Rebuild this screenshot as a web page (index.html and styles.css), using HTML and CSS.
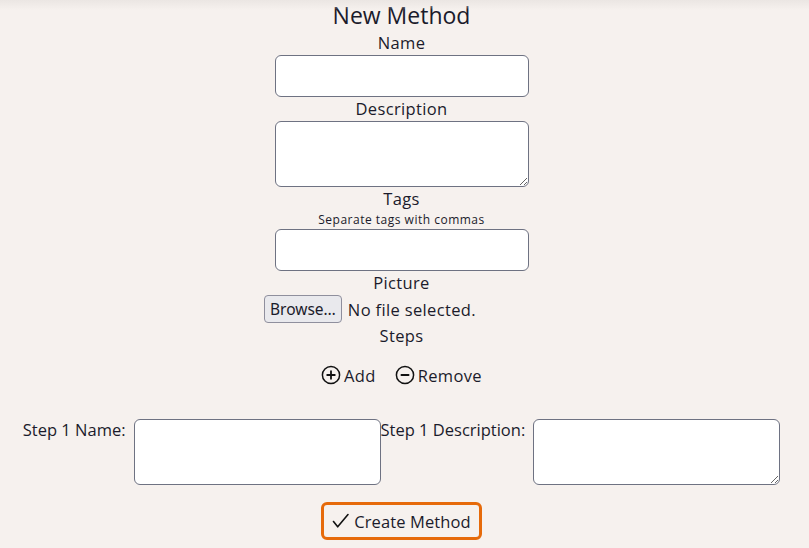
FILE: index.html
```html
<!DOCTYPE html>
<html lang="en">
<head>
<meta charset="utf-8">
<title>New Method</title>
<link rel="stylesheet" href="styles.css">
</head>
<body>
<div class="topshade"></div>
<form class="method-form">
  <h2 class="title">New Method</h2>
  <label class="field-label" for="name">Name</label>
  <input class="text-input" id="name" type="text">
  <label class="field-label" for="desc">Description</label>
  <textarea class="text-area" id="desc"></textarea>
  <label class="field-label" for="tags">Tags</label>
  <div class="hint">Separate tags with commas</div>
  <input class="text-input" id="tags" type="text">
  <label class="field-label">Picture</label>
  <div class="file-row">
    <button type="button" class="browse">Browse…</button>
    <span class="file-status">No file selected.</span>
  </div>
  <div class="field-label">Steps</div>
  <div class="step-actions">
    <span class="action">
      <svg width="20" height="20" viewBox="0 0 20 20"><circle cx="10" cy="10" r="8.6" fill="none" stroke="#111" stroke-width="1.5"/><path d="M10 6.2v7.6M6.2 10h7.6" stroke="#111" stroke-width="1.8" stroke-linecap="round"/></svg>
      Add
    </span>
    <span class="action">
      <svg width="20" height="20" viewBox="0 0 20 20"><circle cx="10" cy="10" r="8.6" fill="none" stroke="#111" stroke-width="1.5"/><path d="M6.4 10h7.2" stroke="#111" stroke-width="1.8" stroke-linecap="round"/></svg>
      Remove
    </span>
  </div>
  <div class="step-row">
    <label class="step-label">Step 1 Name:</label>
    <textarea class="step-input no-resize"></textarea>
    <label class="step-label">Step 1 Description:</label>
    <textarea class="step-input"></textarea>
  </div>
  <button type="button" class="create">
    <svg width="18" height="18" viewBox="0 0 18 18"><path d="M1.5 9.5l4.2 5.3L16 2.5" fill="none" stroke="#111" stroke-width="1.6" stroke-linecap="round" stroke-linejoin="round"/></svg>
    Create Method
  </button>
</form>
</body>
</html>
```
FILE: styles.css
```css
html, body {
  margin: 0;
  padding: 0;
}
body {
  background: #f6f1ee;
  font-family: "Open Sans", "Liberation Sans", sans-serif;
  color: #1b1b2b;
  min-height: 548px;
  position: relative;
}
.topshade {
  position: absolute;
  left: 0;
  right: 0;
  top: 0;
  height: 10px;
  background: linear-gradient(#ebe6e3, rgba(246, 241, 238, 0));
}
.method-form {
  display: flex;
  flex-direction: column;
  align-items: center;
  padding-right: 6px;
}
.title {
  margin: 1px 0 0;
  font-size: 23px;
  font-weight: 400;
  line-height: 28px;
  height: 30px;
}
.field-label {
  font-size: 16.5px;
  letter-spacing: 0.35px;
  line-height: 22px;
  height: 22px;
  margin-top: 1px;
}
.text-input {
  box-sizing: border-box;
  width: 254px;
  height: 42px;
  border: 1px solid #6e7282;
  border-radius: 6px;
  background: #fff;
  margin: 1px 0 0;
}
.text-area {
  box-sizing: border-box;
  width: 254px;
  height: 66px;
  border: 1px solid #6e7282;
  border-radius: 6px;
  background: #fff;
  margin: 1px 0 0;
  resize: vertical;
}
.hint {
  font-size: 12px;
  letter-spacing: 0.5px;
  line-height: 16px;
  margin-top: 2px;
}
.file-row {
  display: flex;
  align-items: center;
  justify-content: flex-start;
  gap: 6px;
  width: 275px;
  height: 30px;
}
.browse {
  font-family: "Noto Sans", sans-serif;
  font-size: 15.5px;
  height: 28px;
  padding: 0 5px;
  background: #e9e9ed;
  border: 1px solid #8f8f9d;
  border-radius: 4px;
  color: #1b1b2b;
}
.file-status {
  font-size: 16.5px;
  letter-spacing: 0.35px;
}
.step-actions {
  display: flex;
  gap: 19px;
  margin-top: 16px;
  height: 24px;
  align-items: center;
}
.action {
  display: flex;
  align-items: center;
  gap: 3px;
  font-size: 16.5px;
  letter-spacing: 0.35px;
}
.step-row {
  display: flex;
  justify-content: center;
  align-items: flex-start;
  margin-top: 32px;
  width: 100%;
}
.step-label {
  font-size: 16.5px;
  letter-spacing: 0;
  line-height: 22px;
  margin-right: 8px;
}
.step-input {
  box-sizing: border-box;
  width: 247px;
  height: 66px;
  border: 1px solid #6e7282;
  border-radius: 6px;
  background: #fff;
  margin: 0;
  resize: vertical;
}
.no-resize {
  resize: none;
}
.create {
  margin-top: 17px;
  height: 38px;
  box-sizing: border-box;
  display: flex;
  align-items: center;
  gap: 4px;
  padding: 0 8px;
  background: #f6f1ee;
  border: 3px solid #e66a0a;
  border-radius: 6px;
  font-family: "Open Sans", "Liberation Sans", sans-serif;
  font-size: 16.5px;
  letter-spacing: 0.1px;
  color: #1b1b2b;
}
```
